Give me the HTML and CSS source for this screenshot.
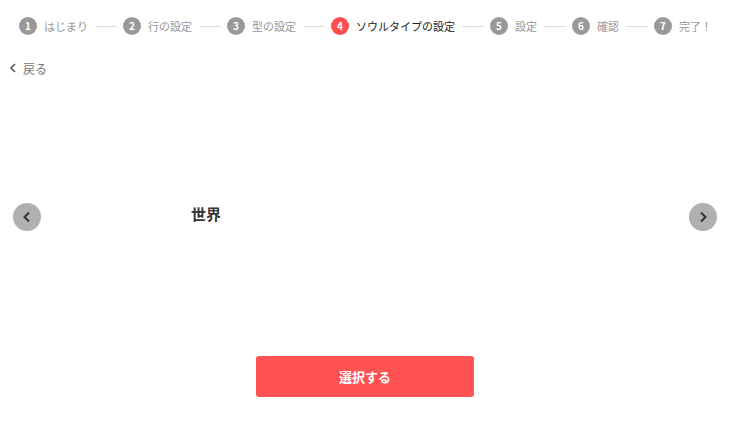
FILE: index.html
```html
<!DOCTYPE html>
<html lang="ja">
<head>
<meta charset="utf-8">
<link rel="stylesheet" href="styles.css">
</head>
<body>
<ol class="steps">
  <li class="step"><span class="num">1</span><span class="label">はじまり</span></li>
  <li class="sep"></li>
  <li class="step"><span class="num">2</span><span class="label">行の設定</span></li>
  <li class="sep"></li>
  <li class="step"><span class="num">3</span><span class="label">型の設定</span></li>
  <li class="sep"></li>
  <li class="step active"><span class="num">4</span><span class="label">ソウルタイプの設定</span></li>
  <li class="sep"></li>
  <li class="step"><span class="num">5</span><span class="label">設定</span></li>
  <li class="sep"></li>
  <li class="step"><span class="num">6</span><span class="label">確認</span></li>
  <li class="sep"></li>
  <li class="step"><span class="num">7</span><span class="label">完了！</span></li>
</ol>
<a class="back" href="#"><svg class="back-icon" width="8" height="10" viewBox="0 0 8 10"><path d="M6 1 L2 5 L6 9" fill="none" stroke="#555" stroke-width="1.6"/></svg><span>戻る</span></a>
<div class="carousel">
  <button class="arrow"><svg width="12" height="12" viewBox="0 0 12 12"><path d="M8 1.5 L3.5 6 L8 10.5" fill="none" stroke="#333" stroke-width="2"/></svg></button>
  <div class="slide"><h2 class="title">世界</h2></div>
  <button class="arrow"><svg width="12" height="12" viewBox="0 0 12 12"><path d="M4 1.5 L8.5 6 L4 10.5" fill="none" stroke="#333" stroke-width="2"/></svg></button>
</div>
<div class="actions"><button class="select">選択する</button></div>
</body>
</html>
```
FILE: styles.css
```css
* { box-sizing: border-box; }
body {
  margin: 0;
  font-family: "Noto Sans CJK JP", "Noto Sans", sans-serif;
  background: #fff;
  color: #333;
}
.steps {
  list-style: none;
  margin: 0;
  padding: 17px 0 0 19px;
  display: flex;
  align-items: center;
  height: 35px;
}
.step {
  display: flex;
  align-items: center;
  gap: 7px;
}
.num {
  width: 18px;
  height: 18px;
  border-radius: 50%;
  background: #999;
  color: #fff;
  font-size: 10px;
  font-weight: 700;
  display: flex;
  align-items: center;
  justify-content: center;
  line-height: 1;
}
.label {
  font-size: 11px;
  color: #999;
  line-height: 18px;
}
.active .num { background: #ff4f4f; }
.active .label { color: #222; }
.sep {
  width: 22px;
  height: 1px;
  background: #ddd;
  margin: 0 6px 0 7px;
}
.back {
  display: flex;
  align-items: center;
  gap: 6px;
  margin: 25px 0 0 9px;
  height: 16px;
  font-size: 12px;
  color: #777;
  text-decoration: none;
  width: max-content;
}
.carousel {
  display: flex;
  align-items: center;
  height: 254px;
  padding: 0 13px;
  margin-top: 14px;
}
.arrow {
  width: 28px;
  height: 28px;
  border-radius: 50%;
  border: none;
  background: #b0b0b0;
  padding: 0;
  display: flex;
  align-items: center;
  justify-content: center;
  flex: none;
}
.slide {
  flex: 1;
  padding-left: 150px;
  margin-bottom: 8px;
}
.title {
  margin: 0;
  font-size: 15px;
  font-weight: 700;
  color: #333;
}
.actions {
  display: flex;
  justify-content: center;
  margin-top: 12px;
}
.select {
  width: 218px;
  height: 41px;
  border: none;
  border-radius: 3px;
  background: #ff5252;
  color: #fff;
  font-family: inherit;
  font-size: 13px;
  font-weight: 700;
}
```
